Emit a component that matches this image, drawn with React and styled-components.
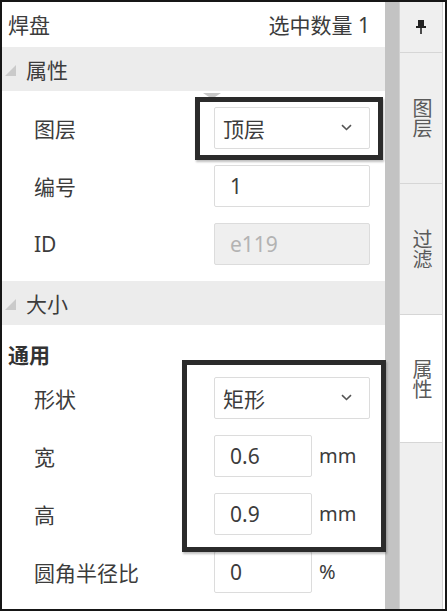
import React from "react";
import styled, { createGlobalStyle } from "styled-components";

const GlobalStyle = createGlobalStyle`
  html, body {
    margin: 0;
    padding: 0;
    background: #fff;
  }
  body {
    font-family: "Noto Sans", "Noto Sans CJK SC", sans-serif;
    color: #3c3c3c;
  }
  * {
    box-sizing: border-box;
  }
`;

const Frame = styled.div`
  position: relative;
  width: 447px;
  height: 611px;
  border: 2px solid #161616;
  display: flex;
  overflow: hidden;
  background: #fff;
`;

const Main = styled.div`
  width: 383px;
  display: flex;
  flex-direction: column;
`;

const Header = styled.div`
  height: 46px;
  display: flex;
  align-items: center;
  justify-content: space-between;
  padding: 0 15px 0 6px;
  font-size: 21px;
  color: #3c3c3c;
`;

const SectionHead = styled.div`
  height: 45px;
  display: flex;
  align-items: center;
  gap: 10px;
  padding-left: 3px;
  background: #ececec;
  font-size: 21px;
  color: #3c3c3c;
`;

const Caret = styled.span`
  width: 0;
  height: 0;
  margin-top: 4px;
  border-left: 11px solid transparent;
  border-bottom: 11px solid #cacaca;
`;

const Body = styled.div`
  display: flex;
  flex-direction: column;
  gap: 16px;
  padding: ${(p) => (p.$top ? `${p.$top}px` : "16px")} 0 16px 32px;
`;

const GroupTitle = styled.div`
  height: 36px;
  line-height: 36px;
  margin: 0 0 -12px -26px;
  font-size: 21px;
  font-weight: 700;
  color: #333;
`;

const Row = styled.div`
  height: 42px;
  display: flex;
  align-items: center;
`;

const Label = styled.div`
  width: 180px;
  font-size: 21px;
  color: #3c3c3c;
`;

const Field = styled.div`
  width: ${(p) => p.$w || 156}px;
  height: 42px;
  display: flex;
  align-items: center;
  justify-content: space-between;
  padding: 0 ${(p) => (p.$select ? "17px 0 8px" : "0 0 15px")};
  border: 1px solid #dcdcdc;
  border-radius: 2px;
  background: ${(p) => (p.$disabled ? "#efefef" : "#fff")};
  color: ${(p) => (p.$disabled ? "#b3b3b3" : "#3c3c3c")};
  font-size: 21px;
`;

const Unit = styled.span`
  margin-left: 7px;
  font-size: 20px;
  color: #3c3c3c;
`;

const Scrollbar = styled.div`
  width: 14px;
  background: #c3c3c3;
`;

const Tabs = styled.div`
  width: 44px;
  display: flex;
  flex-direction: column;
  border-left: 1px solid #d2d2d2;
  border-right: 1px solid #d2d2d2;
  background: #efefef;
`;

const Tab = styled.div`
  height: ${(p) => p.$h}px;
  display: flex;
  align-items: center;
  justify-content: center;
  border-bottom: 1px solid #d6d6d6;
  background: ${(p) => (p.$active ? "#fff" : "#efefef")};
`;

const TabText = styled.span`
  writing-mode: vertical-rl;
  font-size: 20px;
  line-height: 20px;
  color: #5a5a5a;
`;

const Highlight = styled.div`
  position: absolute;
  left: ${(p) => p.$x}px;
  top: ${(p) => p.$y}px;
  width: ${(p) => p.$w}px;
  height: ${(p) => p.$h}px;
  border: 5px solid #2b2b2b;
  box-shadow: 1px 2px 2px rgba(0, 0, 0, 0.25);
  pointer-events: none;
`;

const Notch = styled.div`
  position: absolute;
  left: 201px;
  top: 91px;
  width: 0;
  height: 0;
  border-left: 9px solid transparent;
  border-right: 9px solid transparent;
  border-top: 6px solid #c8c8c8;
`;

const Chevron = () => (
  <svg width="11" height="7" viewBox="0 0 11 7">
    <path d="M1 1.2 L5.5 5.5 L10 1.2" fill="none" stroke="#555" strokeWidth="1.6" />
  </svg>
);

const Pin = () => (
  <svg width="10" height="14" viewBox="0 0 10 14">
    <rect x="2" y="0" width="6" height="7" fill="#222" />
    <rect x="0" y="6" width="10" height="2" fill="#222" />
    <rect x="4.2" y="8" width="1.6" height="6" fill="#222" />
  </svg>
);

export default function App() {
  return (
    <>
      <GlobalStyle />
      <Frame>
        <Main>
          <Header>
            <span>焊盘</span>
            <span>选中数量 1</span>
          </Header>
          <SectionHead>
            <Caret />
            <span>属性</span>
          </SectionHead>
          <Body>
            <Row>
              <Label>图层</Label>
              <Field $select>
                <span>顶层</span>
                <Chevron />
              </Field>
            </Row>
            <Row>
              <Label>编号</Label>
              <Field>1</Field>
            </Row>
            <Row>
              <Label>ID</Label>
              <Field $disabled>e119</Field>
            </Row>
          </Body>
          <SectionHead>
            <Caret />
            <span>大小</span>
          </SectionHead>
          <Body $top={12}>
            <GroupTitle>通用</GroupTitle>
            <Row>
              <Label>形状</Label>
              <Field $select>
                <span>矩形</span>
                <Chevron />
              </Field>
            </Row>
            <Row>
              <Label>宽</Label>
              <Field $w={98}>0.6</Field>
              <Unit>mm</Unit>
            </Row>
            <Row>
              <Label>高</Label>
              <Field $w={98}>0.9</Field>
              <Unit>mm</Unit>
            </Row>
            <Row>
              <Label>圆角半径比</Label>
              <Field $w={98}>0</Field>
              <Unit>%</Unit>
            </Row>
          </Body>
        </Main>
        <Scrollbar />
        <Tabs>
          <Tab $h={51}>
            <Pin />
          </Tab>
          <Tab $h={131}>
            <TabText>图层</TabText>
          </Tab>
          <Tab $h={131}>
            <TabText>过滤</TabText>
          </Tab>
          <Tab $h={128} $active>
            <TabText>属性</TabText>
          </Tab>
        </Tabs>
        <Notch />
        <Highlight $x={193} $y={95} $w={188} $h={63} />
        <Highlight $x={180} $y={358} $w={204} $h={192} />
      </Frame>
    </>
  );
}
